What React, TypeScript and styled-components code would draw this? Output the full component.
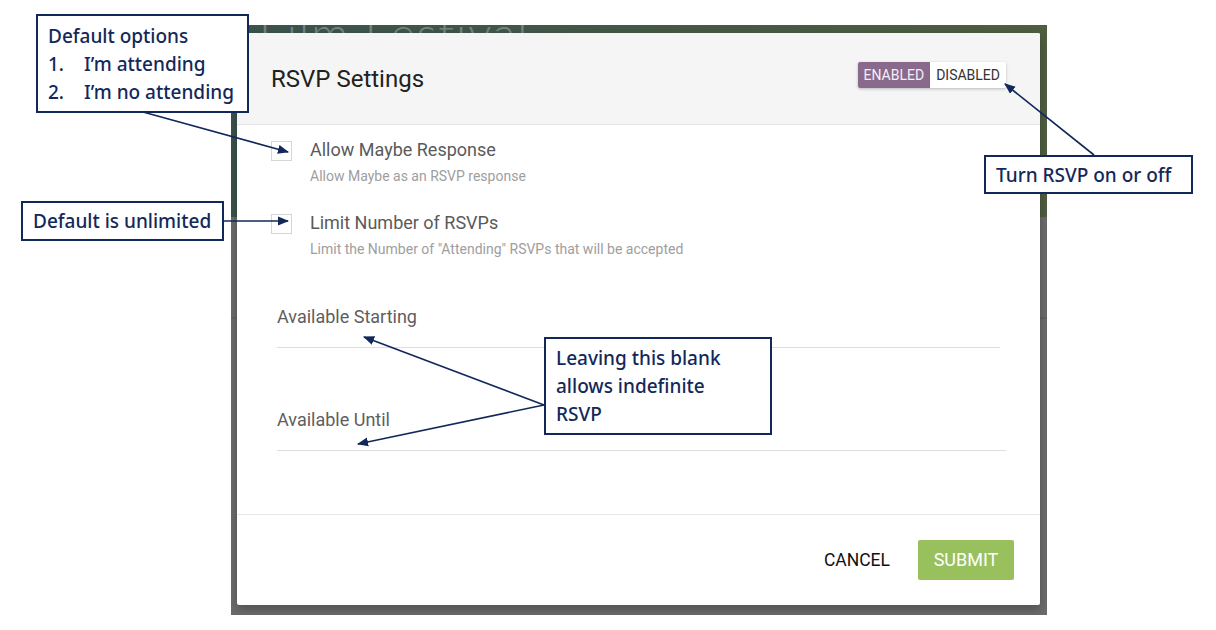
import React, { FC } from "react";
import styled, { createGlobalStyle } from "styled-components";

// Global
const GlobalStyle = createGlobalStyle`
  html, body {
    margin: 0;
    padding: 0;
    background: #ffffff;
  }
  * {
    box-sizing: border-box;
  }
`;

const NAVY = "#13285a";

// Page
const Page = styled.div`
  position: relative;
  width: 1216px;
  height: 630px;
  overflow: hidden;
  font-family: Roboto, "Liberation Sans", sans-serif;
`;

const Stage = styled.div`
  width: 816px;
  height: 590px;
  margin: 25px 0 0 231px;
`;

// the app screen behind the dialog
const Backdrop = styled.div`
  position: relative;
  height: 100%;
  padding: 8px 7px 10px 6px;
  background:
    linear-gradient(to bottom, transparent 292px, rgba(0, 0, 0, 0.08) 292px, rgba(0, 0, 0, 0.08) 294px, transparent 294px),
    linear-gradient(to bottom, transparent 192px, #6b6b6b 192px),
    linear-gradient(to right, #3a534d, #4f5d40);
  overflow: hidden;
`;

const BackdropTitle = styled.div`
  position: absolute;
  left: 28px;
  top: -20px;
  font-family: Lato, "Liberation Sans", sans-serif;
  font-weight: 300;
  font-size: 46px;
  letter-spacing: 2px;
  color: rgba(255, 255, 255, 0.3);
  white-space: nowrap;
`;

// Dialog
const Dialog = styled.div`
  position: relative;
  height: 100%;
  display: flex;
  flex-direction: column;
  background: #ffffff;
  border-radius: 2px;
  box-shadow: 0 4px 10px rgba(0, 0, 0, 0.25);
  overflow: hidden;
`;

const DialogHeader = styled.div`
  height: 92px;
  flex: none;
  display: flex;
  align-items: center;
  justify-content: space-between;
  padding: 0 34px;
  background: #f5f5f5;
  border-bottom: 1px solid #e4e4e4;
`;

const DialogTitle = styled.h2`
  margin: 0;
  font-size: 24px;
  font-weight: 400;
  color: #212121;
`;

const Toggle = styled.div`
  display: flex;
  margin-top: -8px;
  border-radius: 2px;
  overflow: hidden;
  box-shadow: 0 1px 3px rgba(0, 0, 0, 0.25);
`;

const ToggleOption = styled.span<{ $active?: boolean }>`
  display: flex;
  align-items: center;
  height: 26px;
  padding: 0 6px;
  font-size: 14px;
  color: ${(p) => (p.$active ? "#f4eef5" : "#333333")};
  background: ${(p) => (p.$active ? "#8a6a8c" : "#ffffff")};
`;

const DialogBody = styled.div`
  flex: 1;
  display: flex;
  flex-direction: column;
  padding: 15px 34px 0 34px;
  border-bottom: 1px solid #e6e6e6;
`;

const OptionRow = styled.div`
  display: flex;
  gap: 18px;
  margin-bottom: 28px;
`;

const CheckBox = styled.span`
  width: 21px;
  height: 20px;
  margin-top: 1px;
  flex: none;
  border: 1px solid #d6d6d6;
  background: #ffffff;
`;

const OptionText = styled.div`
  display: flex;
  flex-direction: column;
`;

const OptionLabel = styled.span`
  font-size: 18px;
  line-height: 20px;
  color: #5a5a5a;
`;

const OptionHint = styled.span`
  margin-top: 8px;
  font-size: 14px;
  line-height: 17px;
  color: #9e9e9e;
`;

const Field = styled.div<{ $right: number }>`
  margin: 0 ${(p) => p.$right}px 0 6px;
  padding: 0 0 20px;
  border-bottom: 1px solid #dedede;
  font-size: 18px;
  line-height: 20px;
  color: #5e5e5e;
`;

const FieldSpacer = styled.div<{ $h: number }>`
  height: ${(p) => p.$h}px;
  flex: none;
`;

const DialogFooter = styled.div`
  height: 90px;
  flex: none;
  display: flex;
  align-items: center;
  justify-content: flex-end;
  gap: 28px;
  padding: 0 26px 1px 0;
`;

const FlatButton = styled.button`
  border: none;
  background: transparent;
  padding: 0;
  font-family: inherit;
  font-size: 17.5px;
  color: #111111;
  text-transform: uppercase;
`;

const SubmitButton = styled.button`
  width: 96px;
  height: 40px;
  border: none;
  border-radius: 2px;
  background: #98c15d;
  font-family: inherit;
  font-size: 18px;
  color: #ffffff;
  text-transform: uppercase;
`;

// Annotations
const Note = styled.div<{ $x: number; $y: number; $w: number; $h: number }>`
  position: absolute;
  left: ${(p) => p.$x}px;
  top: ${(p) => p.$y}px;
  width: ${(p) => p.$w}px;
  height: ${(p) => p.$h}px;
  display: flex;
  flex-direction: column;
  justify-content: center;
  padding: 0 10px;
  background: #ffffff;
  border: 2px solid ${NAVY};
  font-family: "Noto Sans", "Liberation Sans", sans-serif;
  font-weight: 500;
  font-size: 19px;
  line-height: 28px;
  color: ${NAVY};
  white-space: nowrap;
`;

const NoteLine = styled.div`
  display: flex;
`;

const NoteNum = styled.span`
  width: 36px;
`;

const Arrows = styled.svg`
  position: absolute;
  left: 0;
  top: 0;
  pointer-events: none;
`;

interface IOption {
  label: string;
  hint: string;
}

const options: IOption[] = [
  { label: "Allow Maybe Response", hint: "Allow Maybe as an RSVP response" },
  {
    label: "Limit Number of RSVPs",
    hint: 'Limit the Number of "Attending" RSVPs that will be accepted',
  },
];

const App: FC = () => {
  return (
    <Page>
      <GlobalStyle />
      <Stage>
        <Backdrop>
          <BackdropTitle>Film Festival</BackdropTitle>
          <Dialog>
            <DialogHeader>
              <DialogTitle>RSVP Settings</DialogTitle>
              <Toggle>
                <ToggleOption $active>ENABLED</ToggleOption>
                <ToggleOption>DISABLED</ToggleOption>
              </Toggle>
            </DialogHeader>
            <DialogBody>
              {options.map((o) => (
                <OptionRow key={o.label}>
                  <CheckBox />
                  <OptionText>
                    <OptionLabel>{o.label}</OptionLabel>
                    <OptionHint>{o.hint}</OptionHint>
                  </OptionText>
                </OptionRow>
              ))}
              <FieldSpacer $h={21} />
              <Field $right={6}>Available Starting</Field>
              <FieldSpacer $h={62} />
              <Field $right={0}>Available Until</Field>
            </DialogBody>
            <DialogFooter>
              <FlatButton>Cancel</FlatButton>
              <SubmitButton>Submit</SubmitButton>
            </DialogFooter>
          </Dialog>
        </Backdrop>
      </Stage>

      <Arrows width="1216" height="630" viewBox="0 0 1216 630">
        <defs>
          <marker id="head" viewBox="0 0 10 10" refX="9" refY="5" markerWidth="7" markerHeight="7" orient="auto">
            <path d="M0 1 L10 5 L0 9 Z" fill={NAVY} />
          </marker>
        </defs>
        <g stroke={NAVY} strokeWidth="1.6" fill="none">
          <line x1="143" y1="112" x2="288" y2="152" markerEnd="url(#head)" />
          <line x1="223" y1="221" x2="288" y2="221" markerEnd="url(#head)" />
          <line x1="1094" y1="155" x2="1005" y2="84" markerEnd="url(#head)" />
          <line x1="544" y1="405" x2="364" y2="337" markerEnd="url(#head)" />
          <line x1="544" y1="405" x2="358" y2="444" markerEnd="url(#head)" />
        </g>
      </Arrows>

      <Note $x={36} $y={14} $w={213} $h={99}>
        <NoteLine>Default options</NoteLine>
        <NoteLine>
          <NoteNum>1.</NoteNum>I’m attending
        </NoteLine>
        <NoteLine>
          <NoteNum>2.</NoteNum>I’m no attending
        </NoteLine>
      </Note>
      <Note $x={21} $y={201} $w={203} $h={40}>
        Default is unlimited
      </Note>
      <Note $x={984} $y={155} $w={209} $h={39}>
        Turn RSVP on or off
      </Note>
      <Note $x={544} $y={337} $w={228} $h={98}>
        <NoteLine>Leaving this blank</NoteLine>
        <NoteLine>allows indefinite</NoteLine>
        <NoteLine>RSVP</NoteLine>
      </Note>
    </Page>
  );
};

export default App;
